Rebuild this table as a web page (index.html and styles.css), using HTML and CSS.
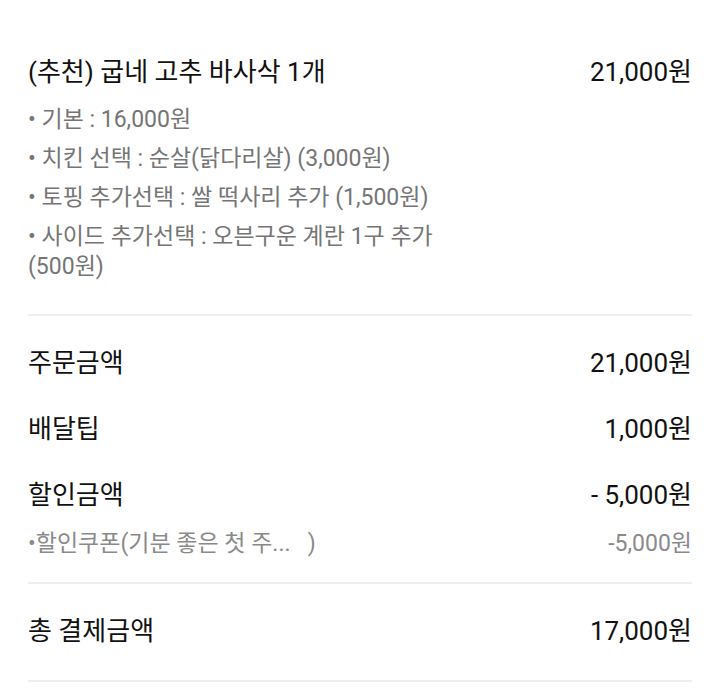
FILE: index.html
```html
<!DOCTYPE html>
<html lang="ko">
<head>
<meta charset="utf-8">
<link rel="stylesheet" href="styles.css">
</head>
<body>
<div class="order">
  <section class="item">
    <div class="row">
      <span class="name">(추천) 굽네 고추 바사삭 1개</span>
      <span class="price">21,000원</span>
    </div>
    <ul class="options">
      <li>• 기본 : 16,000원</li>
      <li>• 치킨 선택 : 순살(닭다리살) (3,000원)</li>
      <li>• 토핑 추가선택 : 쌀 떡사리 추가 (1,500원)</li>
      <li>• 사이드 추가선택 : 오븐구운 계란 1구 추가 <span class="nowrap">(500원)</span></li>
    </ul>
  </section>
  <section class="summary">
    <div class="row line"><span>주문금액</span><span>21,000원</span></div>
    <div class="row line"><span>배달팁</span><span>1,000원</span></div>
    <div class="row line discount"><span>할인금액</span><span>- 5,000원</span></div>
    <div class="row sub"><span>•할인쿠폰(기분 좋은 첫 주...&nbsp;&nbsp;&nbsp;)</span><span>-5,000원</span></div>
  </section>
  <section class="total">
    <div class="row line"><span>총 결제금액</span><span>17,000원</span></div>
  </section>
</div>
</body>
</html>
```
FILE: styles.css
```css
* { box-sizing: border-box; }
html, body { margin: 0; padding: 0; background: #fff; }
body {
  font-family: Roboto, "Noto Sans CJK KR", sans-serif;
  color: #111;
}
.order { padding: 0 28px; }
.row {
  display: flex;
  justify-content: space-between;
  align-items: center;
}
.nowrap { white-space: nowrap; }
.item {
  padding-top: 54px;
  padding-bottom: 32px;
  border-bottom: 2px solid #eeeeee;
}
.item .name, .item .price { font-size: 26px; line-height: 36px; }
.options {
  list-style: none;
  margin: 15px 0 0;
  padding: 0;
  max-width: 440px;
  color: #757575;
  font-size: 23px;
  line-height: 30px;
}
.options li { margin-bottom: 9px; }
.options li:last-child { margin-bottom: 0; }
.summary {
  padding-top: 29px;
  padding-bottom: 23px;
  border-bottom: 2px solid #eeeeee;
}
.line { font-size: 26px; line-height: 36px; margin-bottom: 30px; }
.summary .discount { margin-bottom: 16px; }
.sub { font-size: 23px; line-height: 30px; color: #8a8a8a; }
.total {
  padding-top: 29px;
  padding-bottom: 31px;
  border-bottom: 2px solid #eeeeee;
}
.total .line { margin-bottom: 0; }
```
